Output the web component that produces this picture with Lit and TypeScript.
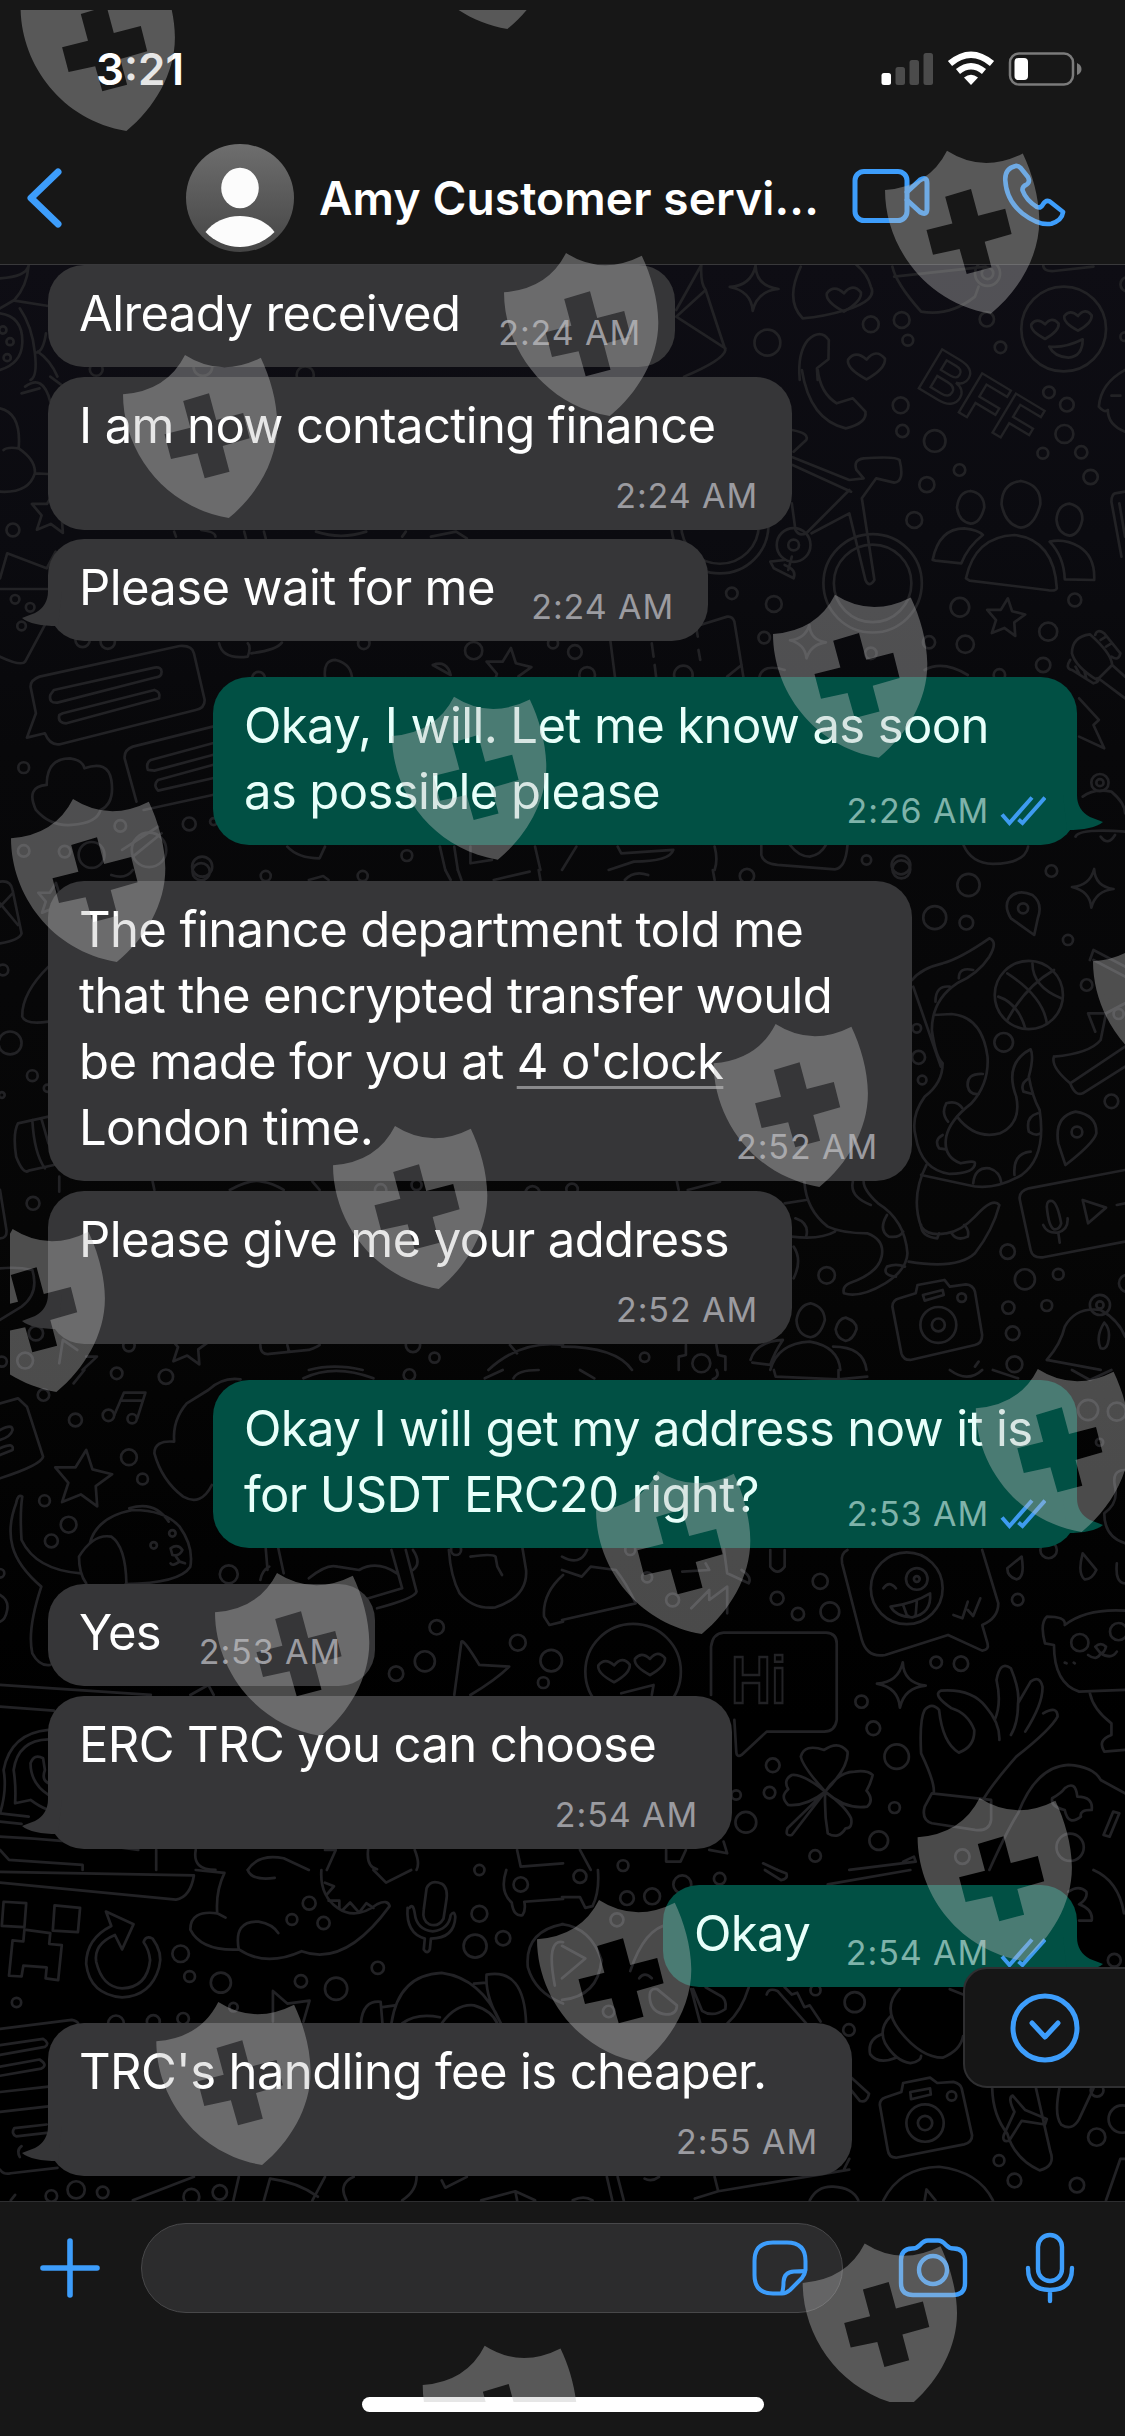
import { LitElement, html, svg, css } from 'lit';
import { customElement, property } from 'lit/decorators.js';
import { classMap } from 'lit/directives/class-map.js';
import { styleMap } from 'lit/directives/style-map.js';

interface Line {
    text: string;
    link?: string;
}

interface Message {
    lines: Line[];
    time: string;
    width: number;
    gap: number;
    out?: boolean;
    wrap?: boolean;
    tail?: boolean;
}

const MESSAGES: Message[] = [
    { lines: [{ text: 'Already received' }], time: '2:24 AM', width: 627, gap: 0 },
    { lines: [{ text: 'I am now contacting finance' }], time: '2:24 AM', width: 744, gap: 10, wrap: true },
    { lines: [{ text: 'Please wait for me' }], time: '2:24 AM', width: 660, gap: 9, tail: true },
    { lines: [{ text: 'Okay, I will. Let me know as soon' }, { text: 'as possible please' }], time: '2:26 AM', width: 864, gap: 36, out: true, tail: true },
    {
        lines: [
            { text: 'The finance department told me' },
            { text: 'that the encrypted transfer would' },
            { text: 'be made for you at ', link: "4 o'clock" },
            { text: 'London time.' },
        ],
        time: '2:52 AM', width: 864, gap: 36,
    },
    { lines: [{ text: 'Please give me your address' }], time: '2:52 AM', width: 744, gap: 10, wrap: true, tail: true },
    { lines: [{ text: 'Okay I will get my address now it is' }, { text: 'for USDT ERC20 right?' }], time: '2:53 AM', width: 864, gap: 36, out: true, tail: true },
    { lines: [{ text: 'Yes' }], time: '2:53 AM', width: 327, gap: 36 },
    { lines: [{ text: 'ERC TRC you can choose' }], time: '2:54 AM', width: 684, gap: 10, wrap: true, tail: true },
    { lines: [{ text: 'Okay' }], time: '2:54 AM', width: 414, gap: 36, out: true, tail: true },
    { lines: [{ text: "TRC's handling fee is cheaper." }], time: '2:55 AM', width: 804, gap: 36, wrap: true, tail: true },
];

// top left horn of every shield
const SHIELDS = [
    [82.6, -32], [463.6, -134], [947, 150.7], [566, 253], [185, 355],
    [835, 594.7], [454, 696.7], [73, 799], [775.6, 1024], [1155, 922],
    [395, 1126], [12.6, 1229], [1037.8, 1369], [658, 1471], [277, 1573],
    [979.6, 1798], [599, 1900], [218.3, 2002], [864.7, 2243.6], [484.7, 2345.8],
];

// The wallpaper is drawn in tiles, each one with its own finer grid.
// dots: x, y, r
interface Tile {
    x: number;
    y: number;
    sy?: number;
    paths: string[];
    dots: number[][];
}

const heart = (x: number, y: number, s = 1) =>
    `M${x} ${y + 32 * s}Q${x - 42 * s} ${y + 8 * s} ${x - 38 * s} ${y - 12 * s}Q${x - 22 * s} ${y - 34 * s} ${x} ${y - 12 * s}Q${x + 20 * s} ${y - 38 * s} ${x + 38 * s} ${y - 14 * s}Q${x + 40 * s} ${y + 8 * s} ${x} ${y + 32 * s}z`;

const spark = (x: number, y: number, s: number) =>
    `M${x + 4} ${y - s}Q${x + 6} ${y - 6} ${x + s} ${y + 2}Q${x + 8} ${y + 8} ${x - 4} ${y + s}Q${x - 8} ${y + 8} ${x - s} ${y - 4}Q${x - 8} ${y - 8} ${x + 4} ${y - s}z`;

const star = (x: number, y: number, s: number) => {
    let d = '';
    for (let i = 0; i < 10; i++) {
        const r = i % 2 ? s * 0.48 : s;
        const a = (i * Math.PI) / 5 - 1.45;
        d += `${i ? 'L' : 'M'}${(x + r * Math.cos(a)).toFixed(1)} ${(y + r * 1.08 * Math.sin(a)).toFixed(1)}`;
    }
    return d + 'z';
};

const TILES: Tile[] = [
    {
        x: 0, y: 0,
        paths: [
            'M80 795Q75 830 0 835M80 795Q75 860 40 900L0 925M40 902L135 918M0 940Q65 950 62 1030Q60 1090 0 1110',
            'M97 1058Q90 980 55 925M97 1058Q105 1130 85 1140M105 1055Q140 1080 160 1130M97 1058Q120 1060 128 1000',
        ],
        dots: [[8, 990, 10], [28, 1025, 10], [20, 1073, 10], [268, 1108, 18], [850, 1125, 24], [565, 1100, 26]],
    },
    {
        x: 562, y: 0,
        paths: [
            'M388 795L318 930M388 795Q385 850 400 870L318 950M400 870Q430 970 455 1050Q450 1080 340 1130M318 950L455 1045',
            spark(535, 865, 68),
            'M665 800Q620 900 670 955Q730 950 790 930Q880 900 860 860Q850 820 820 795',
            heart(785, 895, 1.25),
            'M712 1140L710 1105L742 1078L743 1020Q720 985 685 1020Q655 1060 662 1140',
            heart(848, 1095, 1.35),
            heart(1345, 985), heart(1437, 960),
            'M1357 1040Q1400 1045 1450 1018Q1450 1070 1410 1073Q1370 1070 1357 1040',
            'M920 800Q930 850 1000 935Q1080 950 1150 890L1160 860M925 830L1180 800M1340 795Q1340 815 1370 813L1480 800',
        ],
        dots: [[1397, 987, 118], [572, 1028, 36], [860, 973, 22], [946, 960, 22], [963, 1021, 15], [1183, 958, 20], [1221, 1042, 16], [1575, 853, 20], [1185, 820, 35], [1185, 820, 16], [1567, 1010, 12]],
    },
    {
        x: 0, y: 370,
        paths: [
            'M0 115Q60 130 52 235Q20 230 10 240M52 235Q100 270 97 310Q80 370 0 365M97 310L135 312',
            star(145, 430, 62), star(1415, 905, 66),
            'M85 950Q85 930 110 920L500 828Q535 825 540 850L570 990Q570 1015 545 1020L170 1122Q140 1130 125 1090L75 1103L100 1030Z',
            'M150 960L430 893Q450 890 450 905Q450 920 435 922L160 998Q135 1000 140 975zM175 1030L430 960Q448 965 443 985L185 1060Q160 1060 165 1035z',
            'M592 1070L370 1130Q345 1140 347 1165L380 1295M592 1120L420 1170Q405 1180 412 1200L430 1202L592 1155M592 1185L440 1230Q425 1245 440 1262L592 1225M592 1275L400 1320',
            'M130 1245Q130 1165 195 1165Q230 1170 235 1195Q300 1170 310 1230Q320 1300 280 1320Q270 1360 200 1365Q140 1370 100 1320Q70 1250 130 1245',
            'M0 625L20 550L130 595L155 545M0 657L135 657M125 765L70 875Q60 890 0 860',
            'M905 920Q900 870 935 870Q975 880 980 920M1205 885Q1245 870 1255 915zM610 820Q620 870 690 860Q700 830 690 820M700 850Q770 840 785 818',
            'M70 50Q120 10 140 95M140 20L190 60M60 70L110 55M340 1440L440 1370M370 1460L450 1390M800 1430Q830 1465 890 1465L905 1430',
            'M1225 1430L1240 1500M1265 1430L1275 1500M1490 1430L1505 1500M1310 1430L1310 1480L1370 1470',
            'M485 485L490 500M560 480Q600 485 600 500M680 485L685 505M735 485L740 505M880 485Q950 510 1020 485M1120 500L1130 485M1200 500L1270 485L1300 505',
        ],
        dots: [[36, 480, 18], [42, 688, 12], [84, 712, 12], [60, 768, 12], [66, 1193, 15], [527, 1362, 18], [595, 1355, 10], [1319, 842, 24], [1013, 820, 16], [300, 815, 20], [230, 810, 20], [1133, 1457, 15], [563, 1490, 28], [335, 1368, 16], [66, 1443, 16], [180, 1445, 16], [415, 1440, 48], [255, 1455, 36], [720, 925, 18], [1540, 820, 14]],
    },
    {
        x: 562, y: 370,
        paths: [
            'M668 0Q690 150 790 175Q850 160 845 125L810 85L765 100Q720 70 712 0',
            'M640 180Q690 190 680 210L645 245M642 262L800 330L840 325L820 300Q810 270 840 265Q930 258 940 270Q955 335 925 338L875 325L835 385L870 630Q855 655 845 630L800 430L695 490M800 360L680 490Q660 500 650 480L640 400M642 285L805 365',
            'M620 570L580 575L590 595L645 625Q655 600 620 585M640 560L630 600',
            'M1125 625Q1150 500 1260 495Q1370 510 1378 655Q1375 665 1350 660L1135 632zM1032 570Q1050 475 1120 475Q1160 480 1172 495Q1130 530 1112 580L1040 572zM1358 515Q1400 505 1440 530Q1485 560 1482 630L1400 628Q1398 560 1358 515z',
            'M1138 363Q1175 370 1176 412Q1165 460 1138 461Q1105 455 1100 412Q1105 365 1138 363M1278 333Q1335 345 1332 403Q1315 470 1278 473Q1235 465 1224 403Q1225 340 1278 333M1413 401Q1450 410 1449 449Q1440 495 1413 497Q1380 490 1377 449Q1380 405 1413 401',
            star(1235, 745, 56), spark(685, 815, 50),
            'M1420 850Q1420 800 1470 793Q1530 850 1532 885L1490 930Q1430 890 1420 850zM1532 885L1568 920M1500 930L1568 985M1485 795Q1490 775 1510 790L1555 850Q1550 875 1530 860M1500 810L1515 800M1515 830L1530 820M1415 870Q1400 895 1420 900L1480 940Q1500 935 1490 925M1430 890L1440 910M1455 905L1460 925',
            'M1568 0Q1500 40 1495 110Q1510 130 1520 120Q1520 165 1568 185M1530 77L1555 77',
            'M1568 365L1540 370Q1530 375 1530 395L1558 560M1552 400L1568 500',
            'M1440 985L1495 1050L1480 1065L1510 1135L1440 1100',
            'M1450 1280Q1480 1255 1530 1265Q1568 1300 1568 1330M1430 1400Q1440 1375 1568 1385M1500 1400Q1520 1430 1540 1395',
            'M135 815L148 925M250 820L255 860M258 885L262 920M375 780L378 800M380 840L385 870M385 765L460 740Q475 738 480 755L505 920M460 920L500 885M550 920Q560 880 620 900M1010 900Q1060 870 1130 915',
            'M555 1425L555 1455Q560 1480 600 1485L760 1498Q790 1495 795 1425M635 1425Q660 1460 690 1460Q720 1455 735 1425M0 1500L40 1430M155 1430L165 1450L310 1440Q300 1475 200 1475L130 1500M425 1430Q435 1470 425 1500M1118 1425Q1140 1480 1200 1482Q1290 1480 1298 1430',
        ],
        dots: [[865, 640, 137], [865, 640, 108], [440, 465, 135], [440, 465, 108], [645, 525, 15], [645, 525, 47], [943, 106, 22], [948, 183, 17], [1038, 213, 30], [1356, 67, 16], [1406, 104, 19], [1399, 192, 25], [1339, 250, 15], [1446, 247, 17], [1107, 300, 16], [1016, 344, 21], [1472, 321, 20], [981, 450, 22], [473, 670, 16], [590, 702, 22], [563, 803, 16], [1022, 817, 17], [1108, 712, 26], [1123, 823, 24], [1354, 785, 25], [1428, 690, 18], [1340, 885, 20], [36, 846, 19], [848, 1470, 13], [944, 1485, 26], [1498, 1238, 24], [1498, 1238, 10], [70, 915, 22], [338, 915, 26], [1218, 915, 16], [860, 850, 16]],
    },
    {
        x: 0, y: 870,
        paths: [
            'M0 35Q30 30 35 60L60 190Q55 210 0 220M0 100L50 165M0 110L35 70M135 290Q60 370 62 440Q70 465 135 455',
            'M135 740L50 760Q35 790 45 860Q65 915 80 902L150 885M90 750Q95 850 125 895M115 745L135 820M165 920L165 965M0 960L18 1080Q20 1105 0 1105',
            star(525, 1425, 62), star(150, 90, 48),
            'M725 1425Q725 1455 750 1452L860 1440Q885 1430 890 1425M800 1425L805 1445M1360 1500Q1450 1410 1568 1425M860 1500Q930 1480 1010 1500M1420 1425L1440 1450',
            'M425 935L430 960M640 960Q700 925 730 935Q760 940 790 960M870 935L890 960M1240 0L1255 30M1275 0L1285 30M1375 30L1475 5M1500 0L1505 30',
            'M0 1195Q50 1190 90 1200Q110 1270 60 1310Q30 1330 0 1350M165 1480L175 1410L215 1440M240 1460L270 1460L230 1500M310 15Q350 30 370 0M860 30L900 18L915 30',
        ],
        dots: [[8, 300, 15], [28, 519, 32], [90, 617, 15], [92, 1000, 18], [132, 655, 10], [5, 675, 8], [740, 18, 14], [1010, 18, 14], [1160, 945, 14], [1060, 960, 16], [359, 1427, 16], [1150, 1425, 20], [1210, 1463, 14], [1483, 970, 20], [70, 1472, 22], [5, 1475, 14], [100, 1390, 20], [560, 5, 24]],
    },
    {
        x: 562, y: 870,
        paths: [
            'M1315 195L1250 145Q1230 110 1245 85Q1270 55 1310 75Q1340 100 1325 145zM1402 885L1382 820Q1370 740 1430 725Q1490 735 1488 790Q1480 820 1402 885z',
            spark(1478, 55, 58),
            'M1240 450Q1290 350 1370 300M1240 310Q1340 380 1350 460M1215 380Q1270 400 1290 475M1310 280Q1310 350 1390 385',
            'M975 330Q1000 295 1060 280Q1110 265 1190 205Q1215 215 1190 260Q1160 310 1100 340Q1030 390 1030 480Q1040 560 1060 580Q1060 640 1010 680Q970 740 985 800Q1000 900 1080 912Q1150 910 1150 880Q1150 870 1110 880Q1060 860 1070 800Q1080 750 1140 700Q1190 640 1185 560Q1170 440 1085 432L1035 435M978 350L1055 590',
            'M1100 740Q1150 810 1220 790Q1280 760 1265 680Q1230 580 1305 538Q1315 560 1300 620Q1310 680 1330 720Q1350 860 1280 915Q1200 965 1130 945L1000 915M1015 885Q970 980 1000 1070Q1020 1100 1070 1090Q1110 1085 1150 1040Q1200 980 1218 1005Q1200 1080 1150 1150Q1100 1200 965 1175',
            'M675 935Q680 1020 740 1070Q780 1090 850 1090Q900 1110 890 1160Q880 1210 800 1240Q780 1250 785 1270Q830 1285 900 1240Q960 1200 962 1150Q955 1050 880 1000Q840 960 840 935M620 1000L680 990M640 1100Q720 1110 760 1085',
            'M1172 612Q1125 610 1130 650Q1135 675 1160 672M1115 715Q1100 690 1070 700Q1055 730 1075 755M1060 795Q1035 810 1050 835L1070 838M1145 940Q1150 890 1190 895Q1220 905 1224 940M1260 915Q1255 850 1305 845M1325 730Q1290 740 1300 785Q1320 800 1332 790M1300 625Q1275 640 1285 665L1310 672M1040 395Q1040 345 1080 350M1105 325Q1105 290 1145 300M1000 1065Q1000 1100 1045 1105L1050 1090M1085 1090Q1100 1115 1130 1100Q1135 1080 1120 1065M810 935Q800 980 860 1005M905 1035Q880 1080 910 1100Q940 1105 950 1085M930 1220Q890 1215 905 1190Q930 1180 955 1190M650 1045Q690 1060 680 1100M645 1130Q670 1170 645 1225',
            'M920 1310Q920 1290 940 1285L985 1270L990 1245L1065 1230L1080 1250L1125 1243Q1145 1245 1150 1265L1170 1395Q1170 1420 1150 1425L970 1470Q950 1470 945 1450zM1005 1275L1060 1260L1063 1275L1010 1292z',
            'M1568 900L1300 955Q1270 965 1275 990L1305 1140Q1310 1165 1340 1162L1568 1115M1350 1010Q1350 990 1365 993Q1380 1000 1390 1060Q1385 1080 1370 1078Q1355 1070 1350 1010M1340 1065Q1350 1090 1380 1088Q1410 1080 1408 1045M1382 1088L1386 1118M1450 990L1515 1013L1465 1060zM1545 1005L1568 1000',
            'M1350 1470Q1390 1420 1400 1370Q1430 1310 1500 1320Q1550 1350 1568 1400M1350 1470L1500 1500M1510 1358Q1530 1380 1520 1420Q1515 1440 1500 1435Q1485 1400 1510 1358',
            'M1370 560Q1470 550 1500 510L1515 430L1465 430L1485 485M1370 560Q1360 590 1415 640L1568 530M1415 640Q1430 680 1450 670L1568 590M1470 270L1480 240L1568 290M1480 270L1568 320M1515 430L1568 400',
            'M692 1300Q730 1310 732 1350Q720 1398 692 1402Q655 1395 653 1350Q660 1305 692 1300M790 1343Q822 1355 820 1378Q810 1410 790 1413Q765 1405 762 1378Q770 1345 790 1343M580 1500Q600 1420 690 1415Q770 1430 775 1500M525 1470Q540 1415 615 1410Q590 1450 580 1485L530 1478M755 1430Q840 1430 848 1500',
            'M325 1500L325 1460L345 1455L345 1425M430 1425L435 1455L455 1460L455 1500M0 1430Q150 1430 195 1500M175 30Q200 0 240 15M420 0L425 30M320 935L325 960M350 960L440 935M1150 1490L1160 1475',
        ],
        dots: [[1300, 375, 95], [1048, 1365, 50], [1048, 1365, 18], [1113, 1283, 12], [1498, 1305, 28], [1498, 1305, 10], [388, 1480, 25], [1284, 115, 14], [1434, 786, 15], [1132, 45, 31], [1038, 143, 32], [1126, 158, 19], [1409, 210, 14], [1461, 345, 16], [1230, 517, 26], [988, 475, 12], [993, 562, 18], [1003, 630, 12], [1530, 694, 19], [1241, 1145, 20], [1289, 1228, 28], [1382, 1213, 15], [1243, 1313, 17], [1350, 1307, 15], [1255, 1390, 19], [1260, 1483, 22], [737, 1216, 23], [230, 1462, 13], [945, -2, 25], [1363, 3, 16], [515, 18, 20], [1575, 1240, 24], [28, 958, 16], [1550, 432, 14]],
    },
    {
        x: 0, y: 1370,
        paths: [
            'M0 100L50 85L75 110L120 260Q115 285 0 325M0 180Q35 160 35 180Q30 200 0 210M0 235Q40 215 35 240L0 255M205 40L235 0',
            'M318 136L345 68L405 68L382 146M335 92L398 92', star(230, 330, 84),
            'M670 28Q620 20 580 60L520 100Q480 150 485 215Q430 210 430 250Q450 330 510 380Q560 410 590 345',
            'M250 520Q270 440 370 420Q460 420 500 470Q540 530 530 590Q500 640 350 642M220 560Q260 490 310 500Q350 530 352 640M220 560Q220 610 240 640M360 415Q430 390 470 455M475 535Q495 520 508 540Q500 560 480 555zM490 560L500 575Q480 590 475 580M500 575L515 580',
            'M225 610Q100 600 60 510Q55 430 62 380Q50 370 45 400Q20 470 35 530Q50 590 115 650Q75 780 90 850Q110 890 140 885M0 675Q25 690 20 720Q15 750 0 755',
            'M740 535L745 600M775 535L790 610M1090 540L1120 655L1010 690M1130 540L1160 665Q1155 685 1050 715M860 625Q910 580 940 590L1000 600Q1050 570 1105 610M725 630Q730 600 750 590M1150 540Q1175 580 1150 600',
            'M1250 540Q1255 620 1280 670Q1320 720 1380 712Q1470 680 1465 600L1455 535M1310 560Q1370 550 1380 560L1385 590L1398 615M1568 615Q1510 670 1515 740L1530 765L1568 755',
            'M1265 975L1285 815Q1290 805 1335 885L1418 890Q1380 930 1310 975M0 945L420 975M0 1010L150 1022M530 975L580 945L595 975',
            'M135 1080Q30 1090 10 1200Q20 1260 0 1330M135 1108Q50 1110 38 1200Q45 1250 42 1300L85 1290Q110 1310 130 1318M85 1180Q95 1150 120 1165L125 1200Q115 1230 135 1240M85 1180Q85 1240 135 1275M0 1330L80 1340M0 1355L60 1362',
            'M0 1400Q200 1410 385 1440M0 1440L25 1470L230 1485L230 1500M435 1440L435 1500M545 1440Q535 1500 600 1500M690 1500Q720 1450 790 1465L860 1500M905 1440L935 1440L910 1500M1025 1440Q1020 1490 1050 1498M1155 1440Q1170 1480 1160 1500M1440 1440L1450 1490L1568 1480',
            'M845 25Q930 -20 1040 25M1350 25L1400 0M1430 25Q1440 0 1500 0',
        ],
        dots: [[302, 136, 16], [368, 146, 13], [210, 150, 18], [359, 262, 22], [397, 327, 15], [124, 392, 15], [191, 464, 22], [143, 513, 18], [462, 20, 20], [325, 10, 16], [121, 75, 16], [637, 613, 25], [1216, 772, 20], [1103, 911, 20], [1183, 874, 28], [1442, 818, 22], [1535, 872, 30], [1513, 938, 15], [428, 526, 9], [480, 490, 9], [0, 610, 12], [1140, 15, 16], [1270, 540, 14]],
    },
    {
        x: 562, y: 1370,
        paths: [
            'M795 540Q775 550 780 580L835 810Q850 865 900 855L1075 795L1170 842Q1190 840 1185 820L1170 765Q1215 745 1215 700L1170 540M895 655Q910 630 930 655M915 710Q980 700 1025 670Q1030 730 975 742Q930 740 915 710M950 705L960 735Q975 750 985 735L988 695M1090 735L1115 745L1130 695M1130 720L1145 738L1165 685',
            'M415 975L415 830Q420 790 450 788L735 788Q765 790 765 820L765 1050Q760 1085 730 1085L570 1085L500 1155Q485 1165 485 1140L480 1050',
            heart(145, 900, 1.15), heart(245, 880, 1.1), 'M165 970L255 945L250 975', spark(945, 945, 68),
            'M1280 560Q1290 625 1265 628Q1240 620 1240 595zM1450 550L1488 600Q1475 630 1455 628Q1435 610 1450 550M1545 580Q1540 640 1568 640',
            'M1400 760Q1400 740 1350 740Q1330 760 1345 820L1370 825Q1370 940 1440 965L1568 960M1400 765Q1460 715 1568 722M1485 830Q1500 815 1515 830Q1510 850 1500 850zM1500 850Q1490 875 1465 855M1500 850Q1530 870 1545 845M1470 970Q1480 1020 1530 1060L1530 1095Q1490 1110 1510 1145L1568 1140M1400 878L1405 880M1425 878L1428 880',
            'M1035 1270Q1040 1240 1000 1150Q995 1050 1010 1020Q1030 995 1050 1020Q1060 1120 1105 1148Q1150 1130 1148 1080Q1130 1030 1085 1015Q1030 975 1055 962Q1140 955 1180 1010Q1220 1060 1218 1110M1205 1050Q1225 1000 1210 930Q1220 870 1250 895Q1275 960 1270 1000Q1270 1060 1250 1095M1270 1000L1305 935Q1330 915 1338 950Q1340 1000 1290 1085M1340 1030Q1380 1005 1380 1040Q1360 1080 1265 1160Q1200 1240 1175 1285M1030 1270L1195 1290L1195 1350Q1190 1385 1150 1380L1030 1360Q1000 1350 1010 1310z',
            'M733 1265Q670 1190 665 1160Q675 1120 730 1140Q770 1110 795 1145Q800 1190 733 1265Q770 1205 815 1205Q850 1200 865 1215Q860 1240 848 1262Q870 1290 850 1310Q790 1320 733 1265Q790 1310 805 1345Q810 1375 790 1375Q770 1410 740 1390Q730 1330 733 1265L640 1395Q620 1400 628 1375L733 1265Q670 1210 640 1215Q615 1230 630 1258Q605 1280 630 1305Q680 1310 733 1265',
            'M1190 1500Q1240 1380 1270 1330Q1320 1190 1410 1185Q1480 1190 1500 1230L1568 1270M1400 1255Q1430 1230 1435 1280Q1480 1280 1475 1320Q1440 1320 1445 1340Q1410 1370 1400 1320Q1360 1310 1365 1285Q1390 1270 1400 1255M1535 1325L1552 1330L1525 1400L1508 1395z',
            'M590 0L595 20L770 28M770 0L770 28L850 20M50 0L90 25M430 0Q440 20 420 28M1080 0Q1130 40 1170 0M1200 0L1270 25M1420 0L1470 30L1530 0',
            'M0 600L55 620L80 590L150 600M0 750L205 700Q180 640 150 600M450 530L460 610L520 640Q530 620 500 600M360 715L410 660L410 690L460 650L460 730M335 605L410 600L400 580M580 540L580 590Q600 620 620 590L620 540M0 560Q50 590 70 540',
            'M1568 300Q1530 300 1540 350Q1550 400 1510 430Q1510 500 1568 520M290 1440L290 1475L330 1475L345 1440M410 1440L460 1450L450 1415M50 1440L80 1500M560 1480L600 1500M950 1475L980 1460L985 1475L800 1500',
        ],
        dots: [[960, 655, 100], [988, 627, 30], [988, 627, 8], [198, 905, 133], [1442, 818, 24], [1550, 785, 24], [719, 634, 21], [599, 685, 18], [657, 732, 17], [746, 725, 26], [1269, 689, 16], [1355, 540, 23], [1042, 877, 16], [1111, 881, 20], [834, 995, 17], [867, 1075, 19], [932, 1160, 34], [587, 1186, 19], [578, 1268, 16], [512, 1357, 29], [485, 1275, 13], [926, 1313, 15], [882, 1412, 26], [705, 1458, 16], [170, 1487, 15], [1497, 217, 10], [1465, 120, 28], [1545, 125, 25], [1415, 1432, 38], [1115, 1460, 20], [190, 540, 14], [237, 622, 14], [308, 690, 18]],
    },
    {
        x: 0, y: 1870, sy: 0.361,
        paths: [
            'M0 5L540 15Q530 75 490 82L0 35M10 88L73 92L68 158L5 155zM152 98L223 105L217 172L147 168zM68 165L140 175L137 205L172 208L162 305L127 300L130 270L65 265L60 295L25 293L35 195L65 198z',
            'M295 115L372 150L340 220L320 180Q260 205 268 255Q285 325 340 328Q410 325 418 250Q415 220 400 200Q405 180 425 190Q455 230 443 270Q420 350 340 353Q250 345 240 260Q240 190 310 155z',
            'M545 0L625 8Q600 60 605 120Q530 110 530 165Q560 225 665 220Q650 140 720 143Q760 150 775 175M605 120L628 132M665 220Q740 270 840 225Q960 270 1085 100Q1080 80 1050 95Q990 140 940 105Q890 70 895 0M905 35L930 45L908 70M915 85L945 85L945 105M955 110L975 90L1000 118L1020 92L1040 105M690 0Q700 30 765 22M1040 0L1075 35L1145 0',
            'M1180 110L1188 50Q1200 25 1230 38Q1250 50 1242 90L1235 135Q1220 160 1195 150Q1175 140 1180 110zM1140 105Q1150 90 1155 120Q1160 165 1205 170Q1250 165 1255 125Q1265 110 1268 130Q1265 190 1200 190L1197 220Q1190 235 1180 220L1183 190Q1130 175 1135 105',
            'M1090 425Q1110 290 1230 285Q1340 300 1395 425M1355 290Q1460 270 1465 425M1355 290Q1350 350 1395 425M1320 315L1355 312M1230 425Q1270 370 1320 375Q1370 390 1385 425M1120 425Q1160 395 1225 408M1005 425Q1010 360 1060 365L1065 425M1065 380L1100 375',
            'M0 440L200 415Q215 418 218 425M0 485L120 468Q140 480 125 490L0 512M0 545L110 525Q135 540 115 550L0 570M0 615L135 600M0 670L135 655M130 705L40 715Q30 730 45 738L130 728M0 830Q10 845 30 840L160 825M60 765Q45 775 55 795',
            'M760 420L760 335L800 370L862 362L845 420M370 915L540 850M650 915L665 850M735 915L752 855Q830 865 885 905M870 915L905 850M985 850Q940 870 965 915M1160 850Q1160 890 1120 915M1230 860L1240 880L1300 850M1340 915L1435 890L1490 915M1435 890L1440 915M30 915L42 900',
            'M1410 0Q1390 60 1425 90Q1430 130 1455 125Q1465 110 1460 88L1568 80M1568 150Q1460 170 1470 270Q1490 340 1568 370M1568 200Q1520 190 1545 320',
        ],
        dots: [[503, 232, 23], [528, 295, 15], [615, 312, 28], [861, 92, 18], [813, 137, 15], [901, 147, 17], [838, 308, 17], [936, 329, 31], [1052, 271, 17], [1335, 121, 22], [1323, 211, 32], [1401, 189, 20], [46, 367, 13], [1450, 40, 20], [1335, 0, 14], [212, 886, 24], [286, 893, 16], [143, 903, 16], [612, 893, 20], [533, 905, 22], [323, 425, 22], [427, 420, 18], [510, 412, 16], [650, 380, 12]],
    },
    {
        x: 562, y: 1870, sy: 0.361,
        paths: [
            'M100 0Q105 60 85 100L65 105L50 75L0 75M565 0L610 28Q630 25 625 10L600 0M740 40L970 0M1410 60Q1440 40 1460 60Q1465 80 1440 95Q1480 110 1475 140L1440 140M1480 0Q1550 30 1565 120',
            'M0 150Q80 160 110 250Q100 350 0 360M0 210L65 245L0 300M190 280Q230 160 300 150M215 300Q230 280 250 300M245 360Q240 325 265 330L320 375Q320 400 290 400Q250 395 245 360M365 330L390 390Q420 410 455 385Q460 355 435 345L400 325M520 325Q500 390 460 425M360 330L385 425',
            'M570 345Q575 325 600 335L680 425M620 325L640 345L655 340L675 380L690 375L720 420M800 570L855 620Q850 645 830 640L805 610',
            'M940 330Q890 380 940 445Q1000 520 1060 520Q1110 500 1117 460M915 405Q880 440 900 480Q930 530 970 535Q1000 530 1000 515M890 455Q850 470 858 510Q880 540 930 520M1080 330L1117 345',
            'M885 650Q885 635 900 630L945 615L950 590L1025 575L1045 590L1090 587Q1110 592 1113 605L1142 735Q1142 755 1120 760L930 797Q910 797 907 775zM970 615L1025 605L1027 622L972 635z',
            'M1198 605Q1200 680 1240 730Q1260 800 1330 832Q1375 820 1360 780L1320 605M1255 625L1290 665L1350 690L1345 705L1280 695L1245 750Q1225 755 1230 735L1260 670Q1240 630 1255 625M1385 605Q1370 680 1390 705Q1420 725 1440 690L1480 605',
            'M895 915Q940 825 1050 822Q1160 835 1200 915M1010 915L1015 885L1040 915M690 915Q710 875 755 877Q810 880 825 915M125 850L140 915M155 850L172 915M425 850L435 890L370 910M435 890L800 830M785 830L800 800M1515 915L1555 800L1568 800M30 915Q60 900 85 915M230 855Q250 865 270 850',
        ],
        dots: [[1011, 701, 52], [1011, 701, 20], [50, 18, 18], [153, 138, 18], [181, 78, 19], [251, 73, 22], [335, 40, 25], [439, 24, 16], [815, 366, 28], [799, 443, 16], [706, 333, 14], [1538, 250, 18], [1085, 626, 13], [1489, 740, 24], [1217, 805, 15], [1260, 860, 19], [1434, 873, 20], [1560, 690, 38], [1490, 610, 18], [130, 392, 16]],
    },
];

@customElement('chat-wallpaper')
export class ChatWallpaper extends LitElement {
    static styles = css`
        :host {
            display: block;
        }

        svg {
            display: block;
            width: 1125px;
            height: 1936px;
        }

        .ink path,
        .ink ellipse {
            fill: none;
            stroke: #222225;
            stroke-width: 2.7px;
            stroke-linecap: round;
            stroke-linejoin: round;
            vector-effect: non-scaling-stroke;
        }

        text {
            fill: none;
            stroke: #222225;
            stroke-width: 2.4px;
            font-family: 'Liberation Sans', Arial, sans-serif;
            font-weight: 700;
        }
    `;

    render() {
        return html`
            <svg viewBox="0 265 1125 1936" aria-hidden="true">
                ${TILES.map((tile) => {
                    const sy = tile.sy ?? 0.3333;
                    return svg`
                        <g class="ink" transform="translate(${tile.x} ${tile.y}) scale(.3591 ${sy})">
                            ${tile.paths.map((d) => svg`<path d=${d}></path>`)}
                            ${tile.dots.map(([x, y, r]) => svg`<ellipse cx=${x} cy=${y} rx=${r} ry=${(r * 0.3591) / sy}></ellipse>`)}
                        </g>
                    `;
                })}
                <text transform="translate(915 386) rotate(31)" font-size="66" letter-spacing="-1">BFF</text>
                <text transform="translate(731 1703) scale(.84 1)" font-size="66">Hi</text>
            </svg>
        `;
    }
}

@customElement('shield-overlay')
export class ShieldOverlay extends LitElement {
    static styles = css`
        :host {
            display: block;
        }

        svg {
            display: block;
            width: 1125px;
            height: 2436px;
        }

        path {
            fill: rgba(190, 190, 190, 0.39);
            fill-rule: evenodd;
        }
    `;

    render() {
        const shape =
            'M0 0Q36 23 75.8 2.7C85 22 92 46 92.3 69C92.6 105 72 140 43.8 163C-22 152 -62 95 -62 39.3Q-18 36 0 0z' +
            'M-1.8 46L24 38.3L31.2 65L58.2 58L64.6 83.3L37.7 91L44.5 116.7L19.7 123.3L12.6 98.3L-14 104L-20.5 79.3L5.4 72.7z';
        return html`
            <svg viewBox="0 0 1125 2436" aria-hidden="true">
                <clipPath id="area"><rect x="10" y="10" width="1115" height="2392"></rect></clipPath>
                <g clip-path="url(#area)">
                    ${SHIELDS.map(([x, y]) => svg`<path transform="translate(${x} ${y})" d=${shape}></path>`)}
                </g>
            </svg>
        `;
    }
}

@customElement('chat-message')
export class ChatMessage extends LitElement {
    @property({ attribute: false }) message!: Message;

    static styles = css`
        :host {
            display: block;
        }

        .bubble {
            position: relative;
            display: grid;
            box-sizing: border-box;
            padding: 16px 34px 20px 31px;
            border-radius: 36px;
            background: #363638;
            color: #fff;
        }

        .out {
            margin-left: auto;
            background: #015044;
            color: #e8fffa;
        }

        .text {
            grid-area: 1 / 1;
            font-size: 49px;
            line-height: 66px;
            letter-spacing: -0.62px;
        }

        .line {
            height: 66px;
            white-space: pre;
        }

        .wrap .text {
            padding-bottom: 51px;
        }

        .link {
            text-decoration: underline;
            text-decoration-color: #8a8a8c;
            text-decoration-thickness: 3px;
            text-underline-offset: 7px;
            text-decoration-skip-ink: none;
        }

        .meta {
            grid-area: 1 / 1;
            place-self: end;
            display: flex;
            align-items: center;
            gap: 11px;
            margin-bottom: -6px;
            font-size: 34px;
            line-height: 40px;
            letter-spacing: 0.9px;
            color: #9b9ba0;
        }

        .out .meta {
            margin-right: -3px;
            color: #7fb3aa;
        }

        .tail {
            position: absolute;
            bottom: 14px;
            left: -26px;
            width: 40px;
            height: 36px;
            fill: #363638;
        }

        .out .tail {
            left: auto;
            right: -26px;
            fill: #015044;
            transform: scaleX(-1);
        }

        .ticks {
            width: 46px;
            height: 30px;
            fill: none;
            stroke: #3e9bf0;
            stroke-width: 4;
        }
    `;

    render() {
        const { lines, time, width, out, wrap, tail } = this.message;
        return html`
            <div class=${classMap({ bubble: true, out: !!out, wrap: !!wrap })} style=${styleMap({ width: `${width}px` })}>
                ${tail ? html`<svg class="tail" viewBox="0 0 40 36"><path d="M26 0Q26 15 13 22Q5 25 0 27Q10 35 36 35L40 0z"></path></svg>` : null}
                <div class="text">
                    ${lines.map((line) => html`<div class="line">${line.text}${line.link ? html`<span class="link">${line.link}</span>` : null}</div>`)}
                </div>
                <div class="meta">
                    <span>${time}</span>
                    ${out ? html`<svg class="ticks" viewBox="0 0 46 30"><path d="M2 18.5L9.5 27L32 1.5M18.5 23.5L22.5 27L45 1.5"></path></svg>` : null}
                </div>
            </div>
        `;
    }
}

@customElement('app-root')
export class AppRoot extends LitElement {
    static styles = css`
        :host {
            position: relative;
            display: flex;
            flex-direction: column;
            width: 1125px;
            height: 2436px;
            overflow: hidden;
            background: #000;
            font-family: Inter, Roboto, sans-serif;
            color: #fff;
        }

        svg {
            display: block;
            fill: none;
            stroke: #3d9dfb;
            stroke-linecap: round;
            stroke-linejoin: round;
        }

        .header {
            flex: none;
            height: 264px;
            background: #171717;
            border-bottom: 1px solid #39393b;
        }

        .status {
            display: flex;
            align-items: center;
            justify-content: space-between;
            height: 132px;
            padding: 6px 42px 0 96px;
            box-sizing: border-box;
        }

        .clock {
            font-size: 44px;
            font-weight: 600;
        }

        .status-icons {
            width: 204px;
            height: 38px;
            stroke: none;
        }

        .nav {
            display: flex;
            align-items: center;
            height: 132px;
        }

        .back {
            width: 36px;
            height: 60px;
            margin-left: 26px;
            stroke-width: 7;
        }

        .avatar {
            width: 108px;
            height: 108px;
            margin-left: 124px;
            stroke: none;
        }

        .title {
            width: 500px;
            margin-left: 25px;
            font-size: 46px;
            font-weight: 600;
            letter-spacing: 0.15px;
            white-space: nowrap;
        }

        .video {
            width: 80px;
            height: 56px;
            margin: -4px 0 0 32px;
            stroke-width: 5;
        }

        .phone {
            width: 66px;
            height: 66px;
            margin: -6px 0 0 70px;
            stroke-width: 4.6;
        }

        .chat {
            position: relative;
            flex: none;
            height: 1936px;
            overflow: hidden;
            background: linear-gradient(#0e0d14, #0b0b10 14%, #08080a 25%, #060606 50%, #000 75%);
        }

        .wallpaper {
            position: absolute;
            inset: 0;
        }

        .list {
            position: relative;
            display: flex;
            flex-direction: column;
            padding: 0 48px;
        }

        .jump {
            position: absolute;
            right: -2px;
            bottom: 113px;
            display: flex;
            align-items: center;
            justify-content: center;
            box-sizing: border-box;
            width: 164px;
            height: 121px;
            border: 2px solid #2f2f31;
            border-radius: 24px 0 0 24px;
            background: #161616;
        }

        .jump svg {
            width: 72px;
            height: 72px;
            stroke-width: 5;
        }

        .footer {
            flex: 1;
            border-top: 1px solid #2e2e30;
            background: #171717;
        }

        .composer {
            display: flex;
            align-items: center;
            height: 132px;
        }

        .plus {
            width: 62px;
            height: 62px;
            margin-left: 39px;
            stroke-width: 5.6;
        }

        .field {
            display: flex;
            align-items: center;
            justify-content: flex-end;
            box-sizing: border-box;
            width: 702px;
            height: 90px;
            margin-left: 40px;
            padding-right: 34px;
            border: 1px solid #48484a;
            border-radius: 45px;
            background: #2c2c2d;
        }

        .sticker {
            width: 56px;
            height: 56px;
            stroke-width: 4;
        }

        .camera {
            width: 70px;
            height: 62px;
            margin-left: 55px;
            stroke-width: 4.4;
        }

        .mic {
            width: 50px;
            height: 72px;
            margin-left: 57px;
            stroke-width: 4.4;
        }

        .home {
            width: 402px;
            height: 15px;
            margin: 63px 0 0 362px;
            border-radius: 8px;
            background: #fff;
        }

        .shields {
            position: absolute;
            inset: 0;
            pointer-events: none;
        }
    `;

    render() {
        return html`
            <div class="header">
                <div class="status">
                    <span class="clock">3:21</span>
                    ${this.statusIcons()}
                </div>
                <div class="nav">
                    <svg class="back" viewBox="0 0 36 60"><path d="M32 4L5 30L32 56"></path></svg>
                    <svg class="avatar" viewBox="0 0 108 108">
                        <defs>
                            <linearGradient id="grey" x2="0" y2="1">
                                <stop offset="0" stop-color="#6e6e6e"></stop>
                                <stop offset="1" stop-color="#454545"></stop>
                            </linearGradient>
                        </defs>
                        <circle cx="54" cy="54" r="54" fill="url(#grey)"></circle>
                        <ellipse cx="54" cy="44" rx="18.8" ry="20.3" fill="#fcfcfc"></ellipse>
                        <path fill="#fcfcfc" d="M19.5 88C27 78 40 72 54 72C68 72 81 78 88.5 88C80 97 67 103 54 103C41 103 28 97 19.5 88z"></path>
                    </svg>
                    <div class="title">Amy Customer servi...</div>
                    <svg class="video" viewBox="0 0 80 56">
                        <rect x="4" y="3.5" width="52" height="49" rx="9"></rect>
                        <path d="M56 24L69 12Q76 8 76 15V41Q76 48 69 44L56 32"></path>
                    </svg>
                    <svg class="phone" viewBox="0 0 66 66">
                        <path d="M14.4 4Q3.6 6.7 4.3 18.3Q5.4 38.3 21.5 51.5Q37.7 64 50.3 61.7Q61 58.3 62.1 50L48.5 39.3Q44.9 37.6 42 42.3Q39.5 46.7 35.9 45Q25.1 38.3 21.5 28.3Q21 24.3 25.9 22.3Q29.4 20 26.9 15L19.7 6Q16.9 3.3 14.4 4z"></path>
                    </svg>
                </div>
            </div>

            <div class="chat">
                <chat-wallpaper class="wallpaper"></chat-wallpaper>
                <div class="list">
                    ${MESSAGES.map((message) => html`<chat-message style=${styleMap({ marginTop: `${message.gap}px` })} .message=${message}></chat-message>`)}
                </div>
                <div class="jump">
                    <svg viewBox="0 0 72 72"><circle cx="36" cy="36" r="32"></circle><path d="M23 31L36 45L49 31"></path></svg>
                </div>
            </div>

            <div class="footer">
                <div class="composer">
                    <svg class="plus" viewBox="0 0 62 62"><path d="M31 4V58M4 31H58"></path></svg>
                    <div class="field">
                        <svg class="sticker" viewBox="0 0 56 56">
                            <path d="M30 53.5H21Q2.5 53.5 2.5 35V21Q2.5 2.5 21 2.5H35Q53.5 2.5 53.5 21V30Q53 34 50 38L38 50Q34 53.5 30 53.5z"></path>
                            <path d="M53 31Q48 31.5 42 31.5Q32 32 31.5 42Q31.5 49 30 53"></path>
                        </svg>
                    </div>
                    <svg class="camera" viewBox="0 0 70 62">
                        <path d="M3 23Q3 12 14 11.5Q19 11.5 22 8Q26 3.5 30 3.5H40Q44 3.5 48 8Q51 11.5 56 11.5Q67 12 67 23V46Q67 58 55 58H15Q3 58 3 46z"></path>
                        <circle cx="35" cy="33" r="14"></circle>
                    </svg>
                    <svg class="mic" viewBox="0 0 50 72">
                        <rect x="13" y="3" width="24" height="46" rx="12"></rect>
                        <path d="M3 36Q3 58 25 58Q47 58 47 36M25 58V69"></path>
                    </svg>
                </div>
                <div class="home"></div>
            </div>

            <shield-overlay class="shields"></shield-overlay>
        `;
    }

    statusIcons() {
        return html`
            <svg class="status-icons" viewBox="0 0 204 38">
                <rect x="2.5" y="23" width="9.5" height="12" rx="2.5" fill="#fff"></rect>
                <rect x="16.5" y="17" width="9.5" height="18" rx="2.5" fill="#4b4b4b"></rect>
                <rect x="30.5" y="10" width="9.5" height="25" rx="2.5" fill="#4b4b4b"></rect>
                <rect x="44.5" y="3" width="9.5" height="32" rx="2.5" fill="#4b4b4b"></rect>
                <g fill="none" stroke="#fff" stroke-linecap="butt">
                    <path stroke-width="6.5" d="M71 13.5Q92 -4 113 13.5"></path>
                    <path stroke-width="6.5" d="M79 21.5Q92 11 105 21.5"></path>
                </g>
                <path fill="#fff" d="M85 27.5Q92 22 99 27.5L92 35z"></path>
                <rect x="131" y="3.5" width="63" height="31" rx="9" stroke="#7b7b7b" stroke-width="2.5"></rect>
                <rect x="135.5" y="8" width="13.5" height="22" rx="4" fill="#fff"></rect>
                <path fill="#7b7b7b" d="M198 13Q202.5 15 202.5 19Q202.5 23 198 25z"></path>
            </svg>
        `;
    }
}
